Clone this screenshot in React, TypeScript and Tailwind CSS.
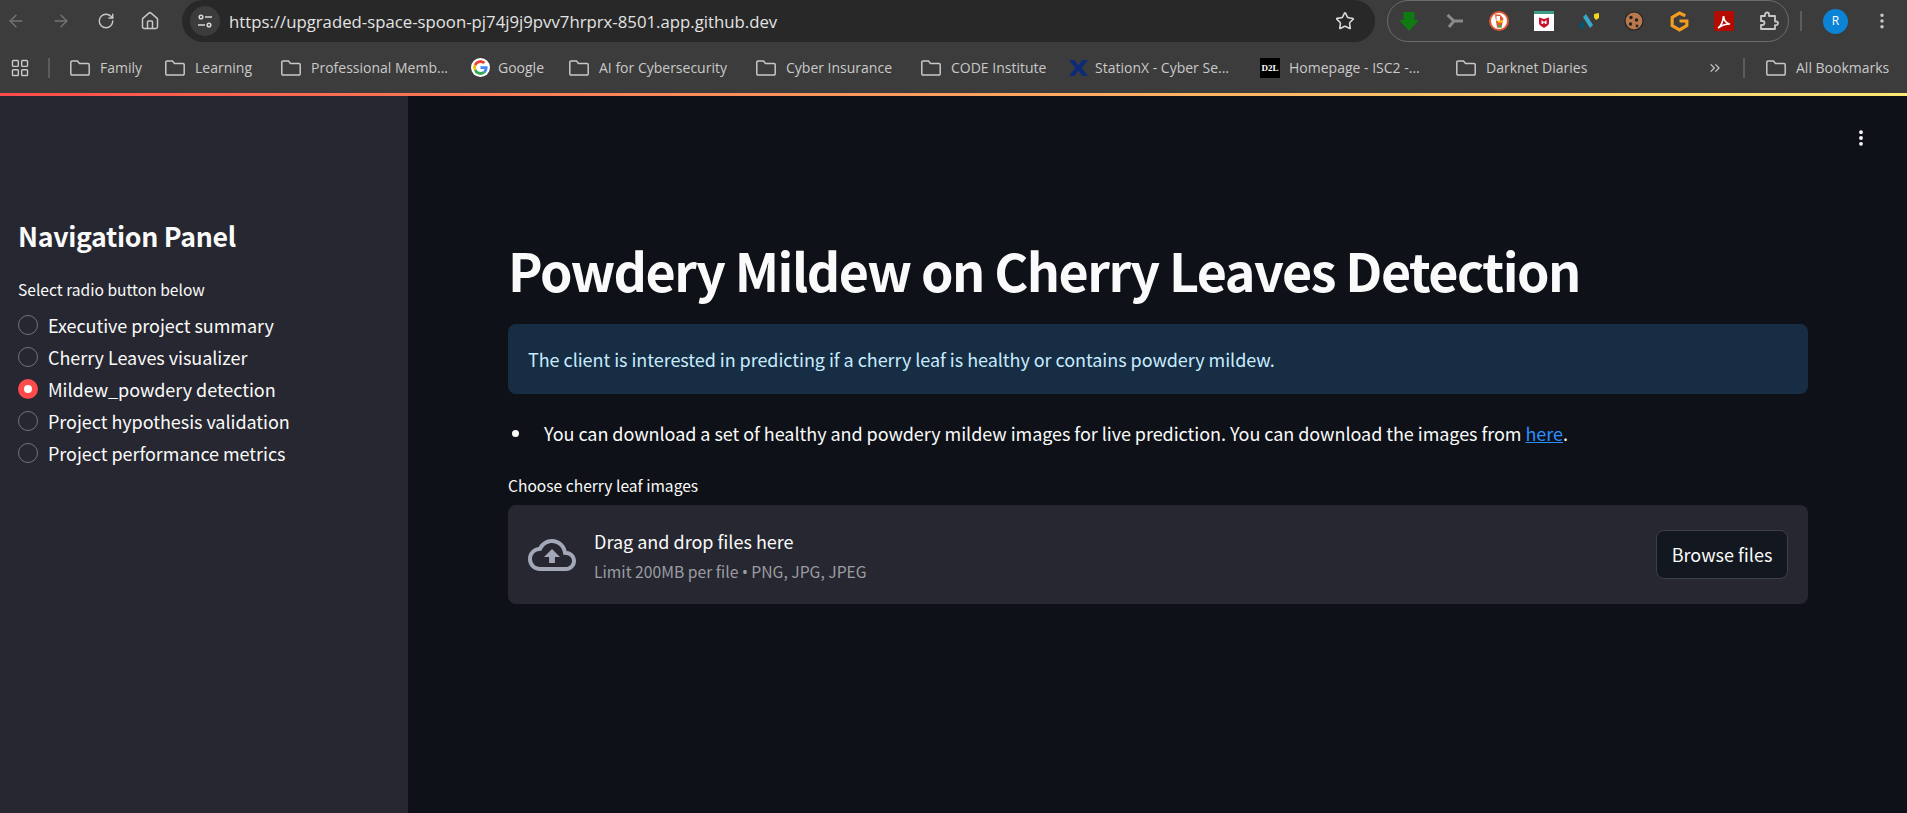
import { ArrowLeft, ArrowRight, RotateCw, Home, Star, LayoutGrid, EllipsisVertical, ChevronsRight } from 'lucide-react';

const sans = 'font-["Noto_Sans_CJK_SC",sans-serif]';

const bookmarks: { label: string; icon: 'folder' | 'google' | 'x' | 'd2l'; w: string }[] = [
  { label: 'Family', icon: 'folder', w: 'w-[95px]' },
  { label: 'Learning', icon: 'folder', w: 'w-[116px]' },
  { label: 'Professional Memb...', icon: 'folder', w: 'w-[190px]' },
  { label: 'Google', icon: 'google', w: 'w-[98px]' },
  { label: 'AI for Cybersecurity', icon: 'folder', w: 'w-[187px]' },
  { label: 'Cyber Insurance', icon: 'folder', w: 'w-[165px]' },
  { label: 'CODE Institute', icon: 'folder', w: 'w-[148px]' },
  { label: 'StationX - Cyber Se...', icon: 'x', w: 'w-[191px]' },
  { label: 'Homepage - ISC2 -...', icon: 'd2l', w: 'w-[196px]' },
  { label: 'Darknet Diaries', icon: 'folder', w: 'w-[251px]' },
];

const pages = [
  'Executive project summary',
  'Cherry Leaves visualizer',
  'Mildew_powdery detection',
  'Project hypothesis validation',
  'Project performance metrics',
];

function FolderIcon() {
  return (
    <svg viewBox="0 0 20 16" className="w-5 h-4 shrink-0" fill="none" stroke="#c7c7c7" strokeWidth="1.500">
      <path d="M2 1h5.500l2 2.500H18a1.200 1.200 0 0 1 1.200 1.200v9.100A1.200 1.200 0 0 1 18 15H2a1.200 1.200 0 0 1-1.200-1.200V2.200A1.200 1.200 0 0 1 2 1z" />
    </svg>
  );
}

function BookmarkIcon({ kind }: { kind: string }) {
  if (kind === 'google') {
    return (
      <svg viewBox="0 0 48 48" className="w-[19px] h-[19px] bg-white rounded-full p-[2px] shrink-0 -mr-[2px]">
        <path fill="#EA4335" d="M24 9.500c3.500 0 6.700 1.300 9.100 3.500l6.800-6.800C35.800 2.400 30.300 0 24 0 14.600 0 6.500 5.400 2.600 13.200l7.900 6.200C12.400 13.600 17.700 9.500 24 9.500z" />
        <path fill="#4285F4" d="M46.900 24.500c0-1.600-.1-3.100-.4-4.500H24v9h12.900c-.6 3-2.200 5.500-4.800 7.200l7.700 6c4.500-4.200 7.100-10.300 7.100-17.700z" />
        <path fill="#FBBC05" d="M10.500 28.600c-.5-1.400-.8-3-.8-4.600s.3-3.200.8-4.600l-7.900-6.200C.9 16.500 0 20.100 0 24s.9 7.500 2.600 10.800l7.900-6.200z" />
        <path fill="#34A853" d="M24 48c6.500 0 11.900-2.100 15.900-5.800l-7.700-6c-2.200 1.500-4.900 2.300-8.200 2.300-6.300 0-11.600-4.200-13.500-9.900l-7.900 6.200C6.500 42.600 14.600 48 24 48z" />
      </svg>
    );
  }
  if (kind === 'x') {
    return (
      <svg viewBox="0 0 19 16" className="w-[19px] h-4 shrink-0 -mr-[3px]">
        <path fill="#0b2a7a" d="M0 0h5.500L9.500 5.500 13.500 0H19l-6.500 8 6.500 8h-5.500l-4-5.500-4 5.500H0l6.500-8z" />
      </svg>
    );
  }
  if (kind === 'd2l') {
    return (
      <span className="w-5 h-5 bg-black text-[9px] font-bold leading-5 text-center text-white font-['Liberation_Serif',serif] block shrink-0 -mr-px">D2L</span>
    );
  }
  return <FolderIcon />;
}

function ExtSlot({ children }: { children: React.ReactNode }) {
  return <div className="w-6 flex items-center justify-center shrink-0">{children}</div>;
}

function ExtensionIcons() {
  return (
    <div className="w-[402px] h-[42px] rounded-[21px] border border-[#6b6b6b] flex items-center gap-[21px] pl-[9px]">
      <ExtSlot>
        <svg viewBox="0 0 20 19" className="w-5 h-[19px]">
          <path fill="#0f7a12" d="M4.500 0h11v8H20L10 19 0 8h4.500z" />
        </svg>
      </ExtSlot>
      <ExtSlot>
        <svg viewBox="0 0 17 14" className="w-[17px] h-[14px]">
          <path fill="none" stroke="#8a8a8a" strokeWidth="3" d="M1.500 1l6.500 6h9M8 7l-5 6" />
        </svg>
      </ExtSlot>
      <ExtSlot>
        <svg viewBox="0 0 20 20" className="w-5 h-5">
          <circle cx="10" cy="10" r="9" fill="#fff" stroke="#de5833" strokeWidth="2" />
          <path fill="#de5833" d="M6 3.500h5l3.500 4-2 9H8z" />
          <path fill="#fff" d="M7.500 5h3.500v5H7.500z" />
          <path fill="#fdd20a" d="M9 9.500h5v2H9z" />
          <path fill="#4ca64c" d="M9 14h3.500v2.500H9z" />
        </svg>
      </ExtSlot>
      <ExtSlot>
        <svg viewBox="0 0 20 20" className="w-5 h-5">
          <rect width="20" height="20" fill="#fff" />
          <rect width="20" height="3" fill="#3d9b86" />
          <path fill="#c8102e" d="M5 6.500l5 1.500 5-1.500V12c0 2-2.500 3.500-5 5-2.500-1.500-5-3-5-5z" />
          <path fill="#fff" d="M7.500 9l2.500 2 2.500-2v4H11v-1.500l-1 1-1-1V13H7.500z" />
        </svg>
      </ExtSlot>
      <ExtSlot>
        <svg viewBox="0 0 21 16" className="w-[21px] h-4">
          <path fill="#0e4f6b" d="M0 11l3.500-3 2 2.500V15l-3 1-2.500-2z" />
          <path fill="#38a8c8" d="M4 4l3-3 7 11-3 3z" />
          <path fill="#f0d91c" d="M15 1l5-1v5l-3 2-2-2.500z" />
        </svg>
      </ExtSlot>
      <ExtSlot>
        <svg viewBox="0 0 20 20" className="w-5 h-5">
          <circle cx="10" cy="10" r="9" fill="#b9784b" stroke="#222" strokeWidth="1.200" />
          <circle cx="7" cy="6.500" r="1.700" fill="#222" />
          <circle cx="12.500" cy="9" r="1.700" fill="#222" />
          <circle cx="6.500" cy="13" r="1.700" fill="#222" />
          <circle cx="13" cy="15" r="1.400" fill="#222" />
        </svg>
      </ExtSlot>
      <ExtSlot>
        <svg viewBox="0 0 18 20" className="w-[19px] h-[21px]">
          <path fill="none" stroke="#f39c1f" strokeWidth="3" d="M14.500 4.500L9 2 2 6v8l7 4 7-4V9.500H9" />
        </svg>
      </ExtSlot>
      <ExtSlot>
        <svg viewBox="0 0 20 20" className="w-5 h-5">
          <rect width="20" height="20" rx="1.500" fill="#b30b00" />
          <path fill="none" stroke="#fff" strokeWidth="1.700" d="M4 17c3-2 5-7 5.500-12 .5 5 2.500 7.500 6.500 8-4 0-8 1-12 4z" />
        </svg>
      </ExtSlot>
      <ExtSlot>
        <svg viewBox="0 0 20 20" className="w-5 h-5" fill="none" stroke="#c7c7c7" strokeWidth="1.800" strokeLinejoin="round">
          <path d="M2 5h4V3.500a2 2 0 0 1 4 0V5h6v5.500h1.200a1.800 1.800 0 0 1 0 3.600H16V18H2v-4h1.500a2 2 0 0 0 0-4H2z" />
        </svg>
      </ExtSlot>
    </div>
  );
}

export default function App() {
  return (
    <div className="w-[1907px] h-[813px] overflow-hidden flex flex-col bg-[#0e1117] font-['Open_Sans',sans-serif]">
      <div className="h-[42px] bg-[#3c3c3c] flex items-center shrink-0">
        <div className="flex items-center gap-[25px] pl-[6px] w-[182px] shrink-0 h-full">
          <ArrowLeft className="w-5 h-5 text-[#737373]" strokeWidth={1.7} />
          <ArrowRight className="w-5 h-5 text-[#737373]" strokeWidth={1.7} />
          <RotateCw className="w-[18px] h-[18px] ml-px text-[#c7c7c7]" strokeWidth={1.9} />
          <Home className="w-5 h-5 text-[#c7c7c7]" strokeWidth={1.8} />
        </div>
        <div className="w-[1193px] h-[42px] rounded-[21px] bg-[#282828] flex items-center pl-[8px] pr-[20px] shrink-0">
          <span className="w-[30px] h-[30px] rounded-full bg-[#3c3c3c] flex items-center justify-center shrink-0">
            <svg viewBox="0 0 16 16" className="w-4 h-4" fill="none" stroke="#d8d8d8" strokeWidth="1.500">
              <circle cx="4" cy="4" r="1.800" />
              <path d="M8 4h7M1 12h7" />
              <circle cx="12" cy="12" r="1.800" />
            </svg>
          </span>
          <span className="ml-[9px] mt-[2px] text-[16.75px] text-[#e3e3e3] leading-none flex-1">https://upgraded-space-spoon-pj74j9j9pvv7hrprx-8501.app.github.dev</span>
          <Star className="w-5 h-5 text-[#d8d8d8]" strokeWidth={1.9} />
        </div>
        <div className="ml-[12px] shrink-0">
          <ExtensionIcons />
        </div>
        <div className="w-[2px] h-[20px] bg-[#5c5c5c] ml-[11px] shrink-0" />
        <span className="ml-[21px] w-[25px] h-[25px] rounded-full bg-[#0b84d6] text-white text-[12px] flex items-center justify-center shrink-0">R</span>
        <EllipsisVertical className="ml-[24px] w-5 h-5 text-[#c7c7c7] shrink-0" strokeWidth={2.2} />
      </div>

      <div className="h-[51px] bg-[#3c3c3c] flex items-center shrink-0 text-[14px] text-[#c9c9c9]">
        <LayoutGrid className="ml-[10px] w-5 h-5 text-[#c7c7c7] shrink-0" strokeWidth={1.7} />
        <div className="w-[2px] h-[20px] bg-[#5c5c5c] ml-[18px] mr-[20px] shrink-0" />
        <div className="flex items-center">
          {bookmarks.map((b) => (
            <div key={b.label} className={`flex items-center gap-[10px] whitespace-nowrap shrink-0 ${b.w}`}>
              <BookmarkIcon kind={b.icon} />
              <span className="-mt-px">{b.label}</span>
            </div>
          ))}
        </div>
        <ChevronsRight className="w-4 h-4 text-[#c7c7c7] shrink-0" strokeWidth={1.8} />
        <div className="w-[2px] h-[20px] bg-[#5c5c5c] ml-[20px] mr-[21px] shrink-0" />
        <FolderIcon />
        <span className="ml-[10px] -mt-px whitespace-nowrap">All Bookmarks</span>
      </div>

      <div className="h-[3px] shrink-0 bg-gradient-to-r from-[#ff4b4b] to-[#ffe873]" />

      <div className={`flex flex-1 min-h-0 ${sans} text-[#fafafa]`}>
        <aside className="w-[408px] bg-[#262730] shrink-0 pl-[18px] pt-[122px]">
          <h2 className="text-[26.7px] leading-[36px] font-semibold tracking-[-0.3px]">Navigation Panel</h2>
          <p className="mt-[25px] text-[15.6px] leading-[20px]">Select radio button below</p>
          <div className="mt-[12px] flex flex-col gap-[4px]">
            {pages.map((page, i) => (
              <div key={page} className="flex items-center h-[28px] text-[18px] tracking-[-0.05px]">
                {i === 2 ? (
                  <span className="w-5 h-5 rounded-full bg-[#ff4b4b] flex items-center justify-center">
                    <span className="w-2 h-2 rounded-full bg-white" />
                  </span>
                ) : (
                  <span className="w-5 h-5 rounded-full border border-[#70727a]" />
                )}
                <span className="ml-[10px]">{page}</span>
              </div>
            ))}
          </div>
        </aside>

        <main className="flex-1 relative pl-[100px] pr-[99px] pt-[142px]">
          <EllipsisVertical className="absolute right-[36px] top-[32px] w-5 h-5 text-white" strokeWidth={2.6} />
          <h1 className="text-[52px] leading-[64px] font-bold tracking-[-1.5px]">Powdery Mildew on Cherry Leaves Detection</h1>
          <div className="mt-[22px] h-[70px] rounded-lg bg-[#172d43] text-[#c7ebff] text-[18px] tracking-[-0.05px] flex items-center px-5">
            The client is interested in predicting if a cherry leaf is healthy or contains powdery mildew.
          </div>
          <div className="mt-[25px] flex items-center text-[18px] leading-[28px] tracking-[-0.05px]">
            <span className="w-[7px] h-[7px] rounded-full bg-[#fafafa] ml-[4px] mr-[25px] shrink-0" />
            <p>
              You can download a set of healthy and powdery mildew images for live prediction. You can download the images from{' '}
              <a href="#" className="text-[#2b8fff] underline">here</a>.
            </p>
          </div>
          <p className="mt-[28px] text-[15.6px] leading-[20px]">Choose cherry leaf images</p>
          <div className="mt-[10px] h-[99px] rounded-lg bg-[#262730] flex items-center pl-[20px] pr-[20px]">
            <svg viewBox="0 0 24 24" className="w-[48px] h-[48px] text-[#a3a8b8]" fill="currentColor">
              <path d="M19.350 10.040C18.670 6.590 15.640 4 12 4 9.110 4 6.600 5.640 5.350 8.040 2.340 8.360 0 10.910 0 14c0 3.310 2.690 6 6 6h13c2.760 0 5-2.240 5-5 0-2.640-2.050-4.780-4.650-4.960zM19 18H6c-2.210 0-4-1.790-4-4 0-2.050 1.530-3.760 3.560-3.970l1.070-.11.500-.95C8.080 7.140 9.940 6 12 6c2.620 0 4.880 1.860 5.390 4.430l.300 1.500 1.530.11c1.560.1 2.780 1.410 2.780 2.960 0 1.650-1.350 3-3 3zM8 13h2.550v3h2.900v-3H16l-4-4z" />
            </svg>
            <div className="ml-[18px] flex-1 -mt-px">
              <div className="text-[18px] leading-[28px]">Drag and drop files here</div>
              <div className="text-[15.7px] leading-[20px] mt-[7px] text-[#9b9ca3]">
                Limit 200MB per file <span className="font-['Noto_Sans',sans-serif]">•</span> PNG, JPG, JPEG
              </div>
            </div>
            <button className="w-[132px] h-[49px] -mt-px rounded-lg border border-[#3d3f49] bg-[#13171f] text-[18px] text-[#fafafa]">Browse files</button>
          </div>
        </main>
      </div>
    </div>
  );
}
